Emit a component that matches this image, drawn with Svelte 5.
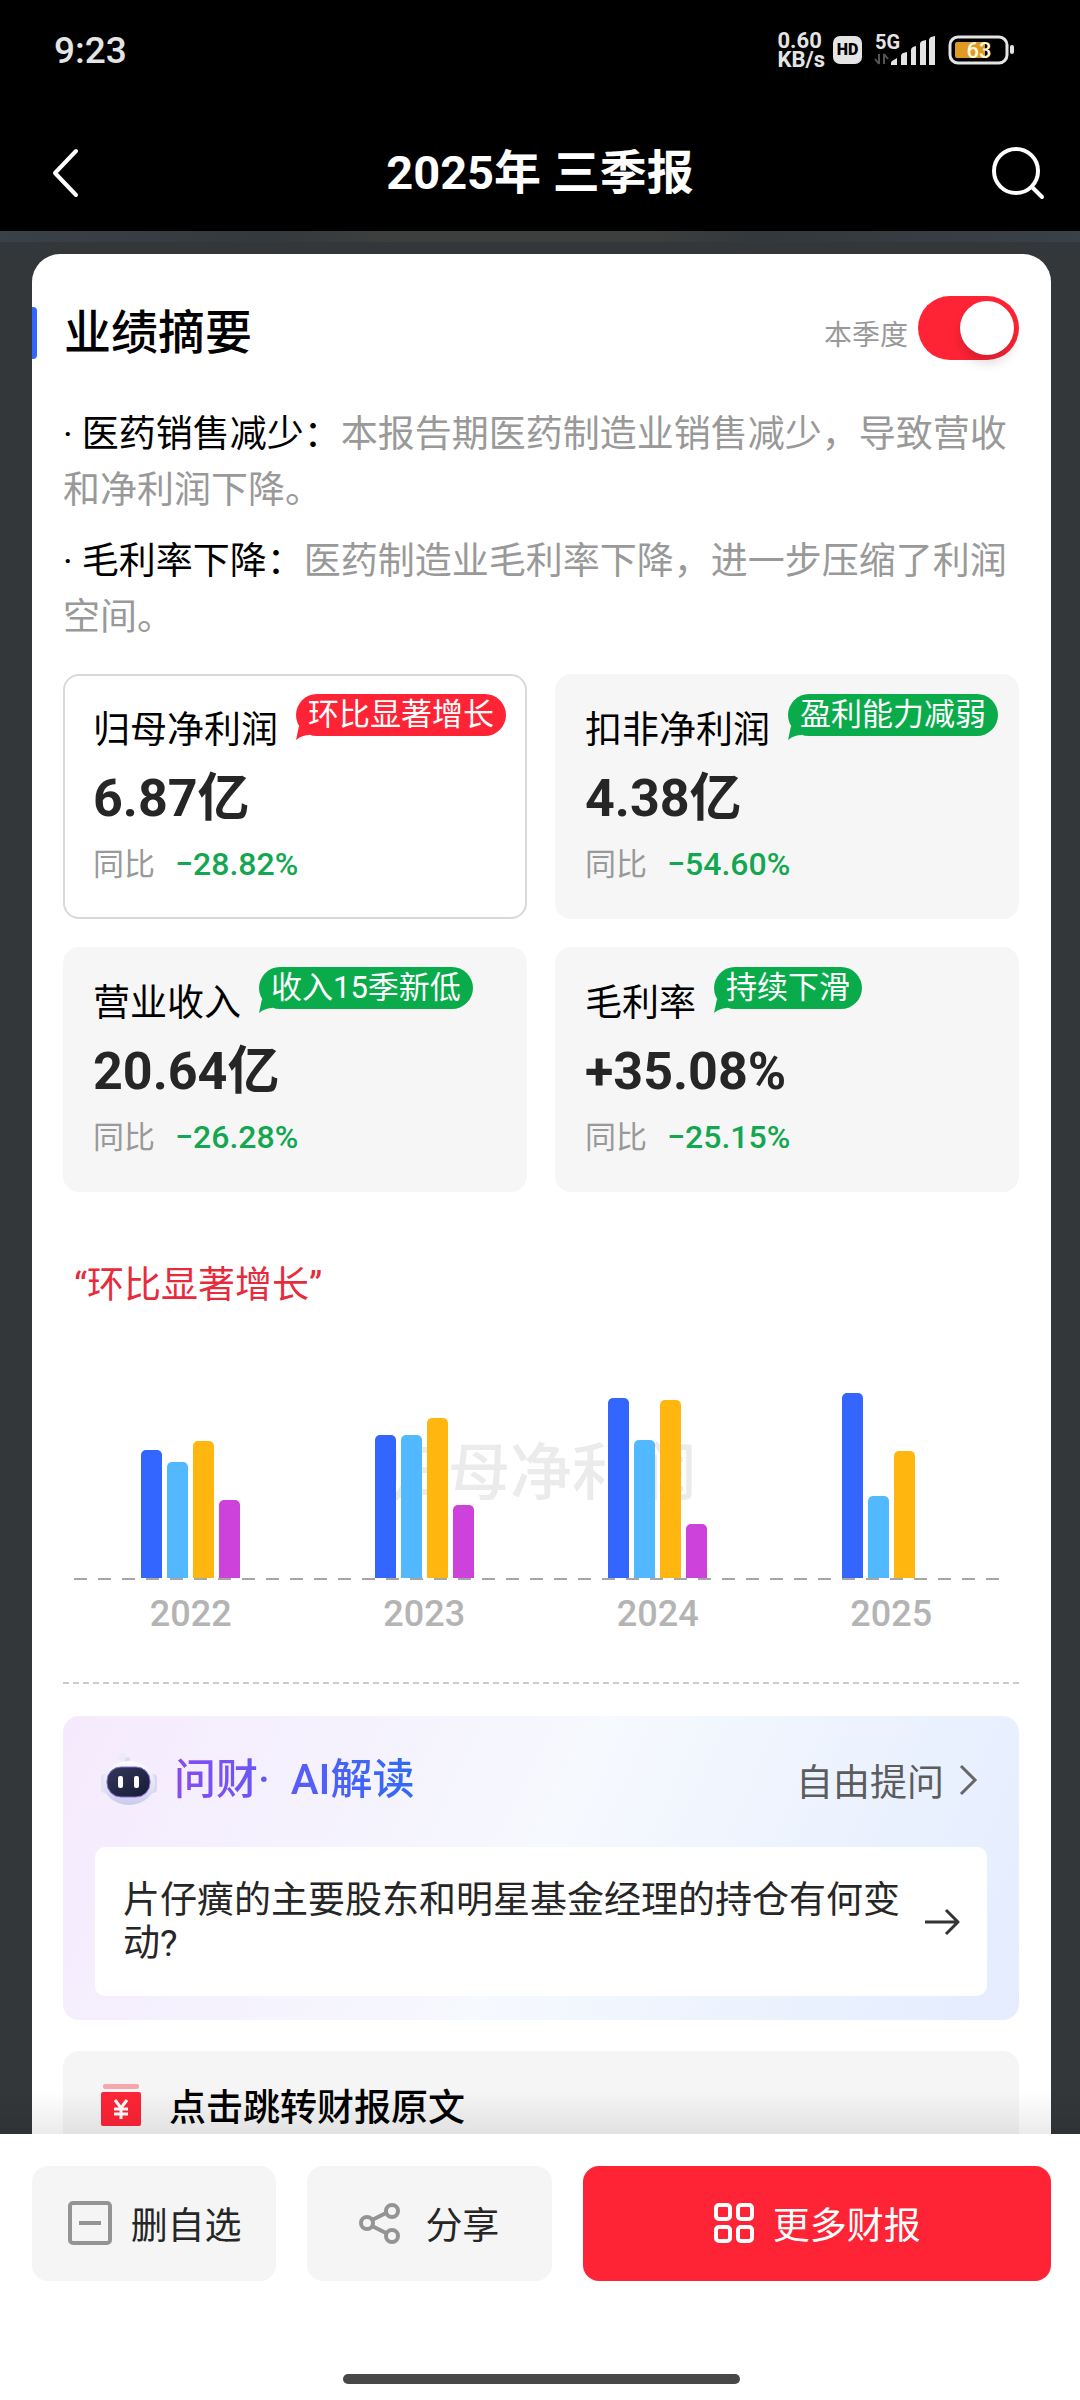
<script>
	let quarterOnly = $state(true)
	let selected = $state(0)

	const summary = [
		{ title: '医药销售减少：', text: '本报告期医药制造业销售减少，导致营收和净利润下降。' },
		{ title: '毛利率下降：', text: '医药制造业毛利率下降，进一步压缩了利润空间。' }
	]

	const metrics = [
		{ name: '归母净利润', value: '6.87亿', change: '−28.82%', tag: '环比显著增长', up: true },
		{ name: '扣非净利润', value: '4.38亿', change: '−54.60%', tag: '盈利能力减弱', up: false },
		{ name: '营业收入', value: '20.64亿', change: '−26.28%', tag: '收入15季新低', up: false },
		{ name: '毛利率', value: '+35.08%', change: '−25.15%', tag: '持续下滑', up: false }
	]

	// bar heights, Q1 to Q4
	const years = [
		{ year: 2022, quarters: [128, 116, 137, 78] },
		{ year: 2023, quarters: [143, 143, 160, 73] },
		{ year: 2024, quarters: [180, 138, 178, 54] },
		{ year: 2025, quarters: [185, 82, 127, 0] }
	]
</script>

<div class="app">
	<div class="status">
		<span class="clock">9:23</span>
		<div class="indicators">
			<div class="speed"><span>0.60</span><span>KB/s</span></div>
			<span class="hd">HD</span>
			<svg class="signal" width="62" height="38" viewBox="0 -2 62 38" aria-hidden="true">
				<text x="1" y="16" font-size="20" font-weight="700" fill="#e4e4e4">5G</text>
				<path d="M5 31V21M5 31L1 26M10 21V31M10 21L14 26" stroke="#555" stroke-width="2" fill="none" />
				<path d="M17 32v-2q0-1 1-2l5-3v7zM27 32v-9q0-2 2-3l4-1v13zM37 32V17q0-2 2-3l3-1v19zM46 32V11q0-2 2-3l4-1v25zM55 32V7q0-2 2-3l4-1v29z" fill="#e4e4e4" />
			</svg>
			<svg class="battery" width="68" height="30" viewBox="0 0 68 30" aria-hidden="true">
				<rect x="2" y="2" width="57" height="26" rx="8" fill="none" stroke="#e4e4e4" stroke-width="3" />
				<path d="M9 7h28v16H9q-2 0-2-2V9q0-2 2-2z" fill="#e09a22" />
				<rect x="62" y="10" width="4" height="9" rx="2" fill="#e4e4e4" />
				<text x="31" y="23" text-anchor="middle" font-size="22" font-weight="500" fill="#fff8e0">63</text>
			</svg>
		</div>
	</div>

	<header>
		<button class="icon-btn" aria-label="返回">
			<svg width="32" height="52" viewBox="0 0 32 52"><path d="M26 4L5 26l21 22" fill="none" stroke="#fff" stroke-width="4" stroke-linecap="round" stroke-linejoin="round" /></svg>
		</button>
		<h1>2025年 三季报</h1>
		<button class="icon-btn" aria-label="搜索">
			<svg width="56" height="56" viewBox="0 0 56 56"><circle cx="26" cy="26" r="22" fill="none" stroke="#fff" stroke-width="4" /><path d="M42 42l10 10" stroke="#fff" stroke-width="4" stroke-linecap="round" /></svg>
		</button>
	</header>

	<main>
		<div class="strip"></div>
		<section class="sheet">
			<div class="head">
				<span class="marker"></span>
				<h2>业绩摘要</h2>
				<label for="quarter">本季度</label>
				<input id="quarter" class="switch" type="checkbox" bind:checked={quarterOnly} />
			</div>

			<div class="summary">
				{#each summary as item}
					<p><b>· {item.title}</b>{item.text}</p>
				{/each}
			</div>

			<div class="metrics">
				{#each metrics as metric, i}
					<button class="metric" class:selected={selected === i} onclick={() => (selected = i)}>
						<span class="metric-top">
							<span class="name">{metric.name}</span>
							<span class="tag" class:up={metric.up}>
								{metric.tag}
								<svg class="tail" width="14" height="14" viewBox="0 0 14 14"><path d="M0 14L3 0l11 9Q6 9 0 14z" fill="currentColor" /></svg>
							</span>
						</span>
						<span class="value">{metric.value}</span>
						<span class="change"><span class="label">同比</span>{metric.change}</span>
					</button>
				{/each}
			</div>

			<div class="chart">
				<p class="quote">“{metrics[selected].tag}”</p>
				<div class="plot">
					<span class="watermark">{metrics[selected].name}</span>
					{#each years as { quarters }}
						<div class="group">
							{#each quarters as height}
								<span class="bar" style="height: {height}px"></span>
							{/each}
						</div>
					{/each}
				</div>
				<div class="axis"></div>
				<div class="years">
					{#each years as { year }}
						<span>{year}</span>
					{/each}
				</div>
			</div>

			<div class="divider"></div>

			<div class="ai">
				<div class="ai-head">
					<svg width="58" height="56" viewBox="0 0 58 56" aria-hidden="true">
						<defs>
							<linearGradient id="shell" x1="0" y1="0" x2="0" y2="1">
								<stop offset="0" stop-color="#fbfbff" />
								<stop offset="0.6" stop-color="#e2e2f5" />
								<stop offset="1" stop-color="#c9c9ec" />
							</linearGradient>
							<linearGradient id="visor" x1="0" y1="0" x2="1" y2="1">
								<stop offset="0" stop-color="#34395c" />
								<stop offset="1" stop-color="#151a35" />
							</linearGradient>
						</defs>
						<path d="M27 12Q27 7 23 5" stroke="#dcdcec" stroke-width="3" fill="none" />
						<circle cx="22" cy="5" r="4" fill="#ececf6" />
						<circle cx="28" cy="7" r="2" fill="#dcdcec" />
						<rect x="1" y="22" width="9" height="19" rx="4" fill="#e2e2f5" />
						<rect x="48" y="22" width="9" height="19" rx="4" fill="#d8d8f2" />
						<ellipse cx="29" cy="31" rx="26" ry="22" fill="url(#shell)" />
						<rect x="7" y="15" width="43" height="30" rx="14" fill="url(#visor)" stroke="#8a6bd8" />
						<rect x="18" y="24" width="5" height="12" rx="2" fill="#fff" />
						<rect x="34" y="24" width="5" height="12" rx="2" fill="#fff" />
					</svg>
					<h3>问财· &nbsp;AI解读</h3>
					<a href="#ask">自由提问
						<svg width="20" height="34" viewBox="0 0 20 34"><path d="M3 3l14 14L3 31" fill="none" stroke="#666" stroke-width="3" /></svg>
					</a>
				</div>
				<button class="question">
					<span>片仔癀的主要股东和明星基金经理的持仓有何变动?</span>
					<svg width="36" height="28" viewBox="0 0 36 28"><path d="M1 14h33M22 2l12 12-12 12" fill="none" stroke="#333" stroke-width="3" stroke-linejoin="round" /></svg>
				</button>
			</div>

			<a class="source" href="#report">
				<svg width="42" height="44" viewBox="0 0 42 44" aria-hidden="true">
					<rect x="3" y="1" width="36" height="5" rx="2" fill="#f8a5ac" />
					<rect x="1" y="9" width="40" height="34" rx="2" fill="#fe2436" />
					<path d="M15 17l6 8 6-8M21 25v11M14 26h14M14 31h14" stroke="#fff" stroke-width="3" fill="none" />
				</svg>
				点击跳转财报原文
			</a>
		</section>
	</main>

	<footer>
		<div class="actions">
			<button class="remove">
				<svg width="46" height="46" viewBox="0 0 46 46"><rect x="3" y="3" width="40" height="40" rx="3" fill="none" stroke="#949494" stroke-width="4" /><path d="M12 23h22" stroke="#949494" stroke-width="4" /></svg>
				删自选
			</button>
			<button class="share">
				<svg width="42" height="42" viewBox="0 0 42 42" fill="none" stroke="#949494" stroke-width="4"><circle cx="8" cy="21" r="6" /><circle cx="33" cy="9" r="6" /><circle cx="33" cy="34" r="6" /><path d="M13 18l14-7M13 24l14 7" /></svg>
				分享
			</button>
			<button class="more">
				<svg width="42" height="42" viewBox="0 0 42 42" fill="none" stroke="#fff" stroke-width="4"><rect x="3" y="3" width="14" height="14" rx="3" /><rect x="25" y="3" width="14" height="14" rx="3" /><rect x="3" y="25" width="14" height="14" rx="3" /><rect x="25" y="25" width="14" height="14" rx="3" /></svg>
				更多财报
			</button>
		</div>
		<div class="home"></div>
	</footer>
</div>

<style>
	:global(body) {
		margin: 0;
		background: #33373a;
	}

	.app {
		display: flex;
		flex-direction: column;
		height: 100vh;
		font-family: Roboto, "Noto Sans CJK SC", sans-serif;
		font-size: 37px;
		color: #000;
		background: #33373a;
	}

	h1, h2, h3, p {
		margin: 0;
	}

	button {
		font: inherit;
		color: inherit;
		border: none;
		padding: 0;
		cursor: pointer;
	}

	a {
		color: inherit;
		text-decoration: none;
	}

	svg {
		display: block;
		flex: none;
	}

	.status {
		display: flex;
		justify-content: space-between;
		align-items: center;
		height: 100px;
		padding: 0 64px 0 54px;
		background: #000;
		color: #e4e4e4;
	}

	.clock {
		font-size: 37px;
		font-weight: 500;
	}

	.indicators {
		display: flex;
		align-items: center;
	}

	.speed {
		display: flex;
		flex-direction: column;
		font-size: 22px;
		line-height: 19px;
		font-weight: 700;
	}

	.hd {
		margin: 0 12px 0 8px;
		width: 29px;
		border-radius: 7px;
		background: #e4e4e4;
		color: #000;
		font-size: 16px;
		line-height: 28px;
		font-weight: 900;
		text-align: center;
	}

	.battery {
		margin-left: 12px;
	}

	header {
		display: grid;
		grid-template-columns: 1fr auto 1fr;
		align-items: center;
		height: 131px;
		padding: 14px 34px 0;
		box-sizing: border-box;
		background: #000;
		color: #fff;
	}

	header h1 {
		font-size: 47px;
		line-height: 60px;
		font-weight: 700;
	}

	.icon-btn {
		justify-self: start;
		padding-left: 16px;
		background: none;
	}

	.icon-btn:last-child {
		justify-self: end;
	}

	main {
		flex: 1;
		min-height: 0;
		overflow-y: auto;
		scrollbar-width: none;
	}

	.strip {
		height: 11px;
		margin-bottom: 12px;
		background: linear-gradient(90deg, #3a4147, #34393d 25%, #3d3f3e 36%, #3d3f3e 60%, #33383c 70%, #3a4147);
	}

	.sheet {
		margin: 0 29px 0 32px;
		padding: 42px 32px 40px 31px;
		border-radius: 28px 28px 0 0;
		background: #fff;
	}

	.head {
		display: flex;
		align-items: center;
		height: 74px;
		margin-left: -31px;
	}

	.marker {
		width: 5px;
		height: 52px;
		margin-right: 27px;
		border-radius: 0 4px 4px 0;
		background: #3366ff;
	}

	.head h2 {
		flex: 1;
		font-size: 47px;
		line-height: 64px;
		font-weight: 500;
	}

	.head label {
		margin-right: 10px;
		font-size: 28px;
		color: #999;
	}

	.switch {
		appearance: none;
		align-self: flex-start;
		width: 101px;
		height: 64px;
		margin: 0;
		padding: 5px;
		border-radius: 32px;
		background: #ccc;
		cursor: pointer;
	}

	.switch::before {
		content: "";
		display: block;
		width: 54px;
		height: 54px;
		border-radius: 50%;
		background: #fff;
		box-shadow: 0 8px 12px rgba(0, 0, 0, 0.15);
	}

	.switch:checked {
		background: #fe2436;
	}

	.switch:checked::before {
		margin-left: auto;
	}

	.summary {
		display: flex;
		flex-direction: column;
		gap: 15px;
		margin-top: 37px;
		line-height: 56px;
		color: #999;
	}

	.summary b {
		font-weight: 400;
		color: #000;
	}

	.metrics {
		display: grid;
		grid-template-columns: minmax(0, 1fr) minmax(0, 1fr);
		gap: 28px;
		margin-top: 28px;
	}

	.metric {
		display: flex;
		flex-direction: column;
		align-items: flex-start;
		padding: 18px 16px 18px 28px;
		border: 2px solid #f6f6f6;
		border-radius: 16px;
		background: #f6f6f6;
		text-align: left;
		white-space: nowrap;
	}

	.metric.selected {
		border-color: #d9d9d9;
		background: #fff;
	}

	.metric-top {
		display: flex;
		align-items: flex-start;
		gap: 18px;
	}

	.name {
		line-height: 74px;
	}

	.tag {
		position: relative;
		padding: 0 12px;
		border-radius: 21px;
		background: #0aab4b;
		color: #fff;
		font-size: 31px;
		line-height: 42px;
	}

	.tag.up {
		background: #fe2436;
	}

	.tail {
		position: absolute;
		left: 0;
		bottom: -4px;
		color: #0aab4b;
	}

	.up .tail {
		color: #fe2436;
	}

	.value {
		font-size: 52px;
		line-height: 62px;
		font-weight: 700;
		color: #262626;
	}

	.change {
		font-size: 32px;
		line-height: 68px;
		font-weight: 500;
		color: #12a750;
	}

	.label {
		margin-right: 20px;
		font-size: 31px;
		font-weight: 400;
		color: #999;
	}

	.chart {
		margin: 66px 11px 0;
	}

	.quote {
		line-height: 56px;
		color: #e62c3c;
	}

	.plot {
		position: relative;
		display: flex;
		height: 264px;
	}

	.watermark {
		position: absolute;
		left: 0;
		right: 0;
		bottom: 68px;
		font-size: 62px;
		line-height: 72px;
		font-weight: 500;
		text-align: center;
		color: #ebebeb;
	}

	.group {
		position: relative;
		flex: 1;
		display: flex;
		justify-content: center;
		align-items: flex-end;
		gap: 5px;
	}

	.bar {
		width: 21px;
		border-radius: 5px 5px 0 0;
		background: #3366ff;
	}

	.bar:nth-child(2) {
		background: #52b8ff;
	}

	.bar:nth-child(3) {
		background: #ffb60f;
	}

	.bar:nth-child(4) {
		background: #cc42db;
	}

	.axis {
		height: 2px;
		background: repeating-linear-gradient(90deg, #a6a6a6 0 13px, transparent 13px 24px);
	}

	.years {
		display: flex;
		margin-top: 6px;
		font-size: 36px;
		line-height: 56px;
		font-weight: 500;
		color: #b4b4b4;
	}

	.years span {
		flex: 1;
		text-align: center;
	}

	.divider {
		height: 2px;
		margin-top: 40px;
		background: repeating-linear-gradient(90deg, #ccc 0 6px, transparent 6px 10px);
	}

	.ai {
		margin-top: 32px;
		padding: 32px 32px 24px;
		border-radius: 16px;
		background: linear-gradient(115deg, #f5eafd, #f6f9fe 50%, #eaf1fe 80%, #e5ecff);
	}

	.ai-head {
		display: flex;
		align-items: center;
		height: 64px;
		padding: 0 9px 0 5px;
	}

	.ai-head h3 {
		margin-left: 16px;
		font-size: 42px;
		line-height: 60px;
		font-weight: 500;
		background: linear-gradient(90deg, #8a4bf0, #5a5cf8 50%, #2f6bf5);
		background-clip: text;
		color: transparent;
	}

	.ai-head a {
		display: flex;
		align-items: center;
		gap: 14px;
		margin-left: auto;
		color: #5c5c5c;
	}

	.question {
		display: flex;
		align-items: center;
		gap: 14px;
		width: 100%;
		margin-top: 35px;
		padding: 32px 27px 31px 28px;
		border-radius: 10px;
		background: #fff;
		color: #262626;
		line-height: 43px;
		text-align: left;
	}

	.question span {
		flex: 1;
	}

	.source {
		display: flex;
		align-items: center;
		gap: 27px;
		height: 108px;
		margin-top: 31px;
		padding: 0 37px;
		border-radius: 16px;
		background: #f5f5f5;
		font-weight: 500;
	}

	footer {
		position: relative;
		padding: 32px 29px 16px 32px;
		background: #fff;
	}

	footer::before {
		content: "";
		position: absolute;
		left: 0;
		right: 0;
		bottom: 100%;
		height: 44px;
		background: linear-gradient(transparent, rgba(0, 0, 0, 0.08));
		pointer-events: none;
	}

	.actions {
		display: grid;
		grid-template-columns: 244fr 244fr 468fr;
		gap: 31px;
	}

	.actions button {
		display: flex;
		justify-content: center;
		align-items: center;
		gap: 18px;
		height: 115px;
		padding-bottom: 2px;
		border-radius: 16px;
		background: #f5f5f5;
		color: #262626;
	}

	.actions .share {
		gap: 24px;
	}

	.actions .more {
		background: #fe2436;
		color: #fff;
	}

	.home {
		width: 39%;
		height: 10px;
		margin: 93px auto 0;
		border-radius: 5px;
		background: #484848;
	}
</style>
